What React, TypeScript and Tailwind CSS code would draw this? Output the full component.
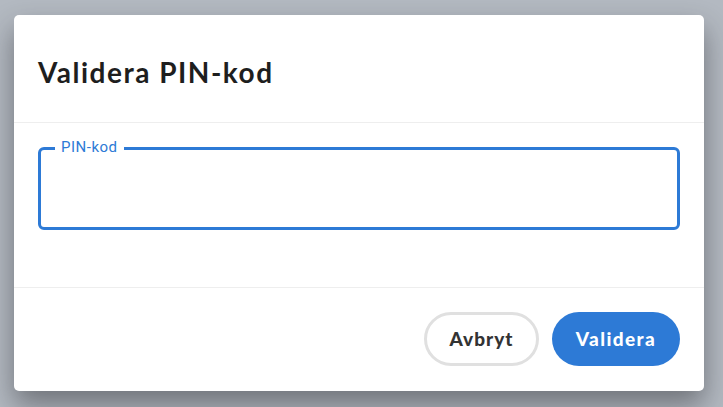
import React from "react";

export default function App() {
  return (
    <div
      className="w-[723px] h-[407px] bg-[#b3b9c1] pt-[15px] pl-[14px] overflow-hidden"
      style={{ fontFamily: "Lato, 'Noto Sans', sans-serif" }}
    >
      <div className="w-[690px] h-[376px] bg-white rounded-[5px] shadow-[0_14px_28px_rgba(30,30,35,0.45)] flex flex-col">
        <div className="h-[108px] border-b border-[#eeeeee] flex items-center px-[24px] pt-[6px]">
          <h1 className="text-[28px] font-bold text-[#1e1e1e] tracking-[1.5px]">Validera PIN-kod</h1>
        </div>
        <div className="h-[165px] border-b border-[#eeeeee] px-[24px] pt-[24px]">
          <div className="relative h-[83px] border-[3px] border-[#2d7ad6] rounded-[6px]">
            <span
              className="absolute -top-[11px] left-[14px] px-[6px] bg-white text-[15px] leading-[17px] tracking-[0.5px] text-[#2d7ad6]"
              style={{ fontFamily: "Roboto, sans-serif" }}
            >
              PIN-kod
            </span>
          </div>
        </div>
        <div className="flex-1 flex items-start justify-end gap-[13px] pt-[24px] pr-[24px]">
          <button className="w-[115px] h-[54px] rounded-full border-[3px] border-[#e0e0e0] bg-white text-[19px] font-black tracking-[1px] text-[#333333]">
            Avbryt
          </button>
          <button className="w-[128px] h-[54px] rounded-full bg-[#2d7ad6] text-[19px] font-black tracking-[1.4px] text-white">
            Validera
          </button>
        </div>
      </div>
    </div>
  );
}
